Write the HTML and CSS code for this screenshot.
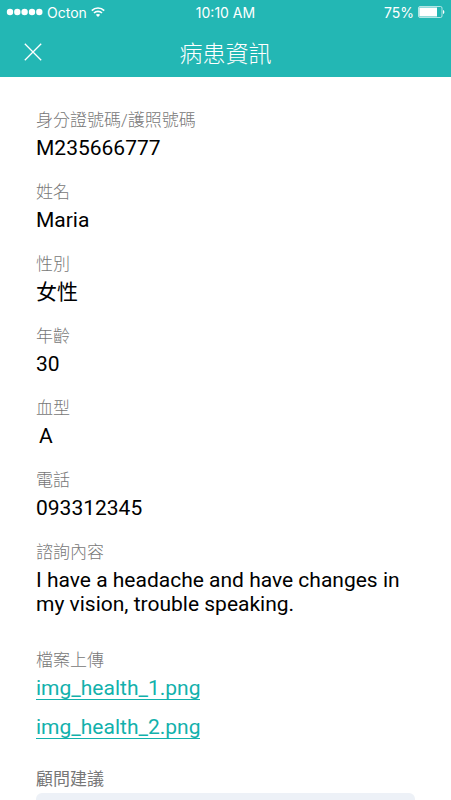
FILE: index.html
```html
<!DOCTYPE html>
<html lang="zh-Hant">
<head>
    <meta charset="UTF-8">
    <meta name="viewport" content="width=device-width, initial-scale=1.0">
    <title>病患資訊</title>
    <link rel="stylesheet" href="styles.css">
</head>
<body>
    <div class="screen">
        <header class="header">
            <div class="status-bar">
                <div class="status-left">
                    <svg class="signal" width="37" height="8" viewBox="0 0 37 8" fill="#fff" aria-hidden="true">
                        <circle cx="4" cy="4" r="3.2"/>
                        <circle cx="11.3" cy="4" r="3.2"/>
                        <circle cx="18.6" cy="4" r="3.2"/>
                        <circle cx="26" cy="4" r="3.2"/>
                        <circle cx="33.3" cy="4" r="3.2"/>
                    </svg>
                    <span>Octon</span>
                    <svg class="wifi" width="14" height="10" viewBox="0 0 14 10" fill="none" stroke="#fff" stroke-width="1.7" aria-hidden="true">
                        <path d="M0.8 3.6C4.3 0.1 9.7 0.1 13.2 3.6"/>
                        <path d="M3 6C5.2 3.8 8.8 3.8 11 6"/>
                        <path d="M7 9.9L4.8 7.7C6 6.6 8 6.6 9.2 7.7Z" fill="#fff" stroke="none"/>
                    </svg>
                </div>
                <div class="status-time">10:10 AM</div>
                <div class="status-right">
                    <span>75%</span>
                    <svg class="battery" width="27" height="12" viewBox="0 0 27 12" aria-hidden="true">
                        <rect x="0.5" y="0.5" width="23.5" height="11" rx="1.5" fill="none" stroke="#fff" stroke-opacity="0.65"/>
                        <rect x="1.3" y="1.5" width="17.7" height="9" fill="#fff"/>
                        <path d="M25 4C26.8 4.5 26.8 7.5 25 8Z" fill="#fff"/>
                    </svg>
                </div>
            </div>
            <div class="nav-bar">
                <button class="close-btn" type="button" aria-label="關閉">
                    <svg width="18" height="18" viewBox="0 0 18 18" fill="none" stroke="#fff" stroke-width="1.3" aria-hidden="true">
                        <path d="M0.8 0.8L17.2 17.2M17.2 0.8L0.8 17.2"/>
                    </svg>
                </button>
                <h1>病患資訊</h1>
            </div>
        </header>

        <main class="content">
            <dl class="patient-info">
                <div class="field">
                    <dt>身分證號碼/護照號碼</dt>
                    <dd>M235666777</dd>
                </div>
                <div class="field">
                    <dt>姓名</dt>
                    <dd>Maria</dd>
                </div>
                <div class="field">
                    <dt>性別</dt>
                    <dd>女性</dd>
                </div>
                <div class="field">
                    <dt>年齡</dt>
                    <dd>30</dd>
                </div>
                <div class="field">
                    <dt>血型</dt>
                    <dd class="blood-type">A</dd>
                </div>
                <div class="field">
                    <dt>電話</dt>
                    <dd>093312345</dd>
                </div>
                <div class="field field-long">
                    <dt>諮詢內容</dt>
                    <dd>I have a headache and have changes in my vision, trouble speaking.</dd>
                </div>
                <div class="field field-files">
                    <dt>檔案上傳</dt>
                    <dd class="files">
                        <a href="#">img_health_1.png</a>
                        <a href="#">img_health_2.png</a>
                    </dd>
                </div>
            </dl>

            <div class="advice">
                <label for="advice">顧問建議</label>
                <textarea id="advice" rows="5"></textarea>
            </div>
        </main>
    </div>
</body>
</html>
```
FILE: styles.css
```css
* {
    box-sizing: border-box;
}
body {
    margin: 0;
    font-family: Roboto, "Noto Sans CJK TC", sans-serif;
    background: #fff;
    color: #000;
}
.screen {
    display: flex;
    flex-direction: column;
    height: 100vh;
}

/* Header */
.header {
    flex: none;
    background: #23b7b4;
    color: #fff;
}
.status-bar {
    display: grid;
    grid-template-columns: 1fr auto 1fr;
    align-items: center;
    height: 24px;
    padding: 0 6px;
    font-family: Inter, "Liberation Sans", sans-serif;
    font-size: 14px;
}
.status-left,
.status-right {
    display: flex;
    align-items: center;
    gap: 4px;
}
.status-right {
    justify-content: flex-end;
}
.nav-bar {
    display: grid;
    grid-template-columns: 34px 1fr 34px;
    align-items: center;
    height: 53px;
    padding: 8px 16px 0;
}
.close-btn {
    display: flex;
    align-items: center;
    justify-content: center;
    height: 34px;
    margin-bottom: 6px;
    padding: 0;
    border: none;
    background: none;
    cursor: pointer;
}
.nav-bar h1 {
    margin: 0;
    font-size: 23px;
    font-weight: 300;
    line-height: 32px;
    text-align: center;
}

/* Patient details */
.content {
    flex: 1;
    min-height: 0;
    overflow-y: auto;
    scrollbar-width: none;
    padding: 31px 36px;
}
.patient-info {
    margin: 0;
}
.field {
    margin-bottom: 20px;
}
.field-long {
    margin-bottom: 32px;
}
.field-files {
    margin-bottom: 28px;
}
.field dt,
.advice label {
    display: block;
    color: #777;
    font-size: 17px;
    font-weight: 300;
    line-height: 24px;
}
.field dd {
    margin: 4px 0 0;
    font-size: 21px;
    line-height: 24px;
}
.field .blood-type {
    padding-left: 3px;
}
.files {
    display: flex;
    flex-direction: column;
    align-items: flex-start;
    gap: 15px;
}
.files a {
    height: 24px;
    border-bottom: 1px solid #12b1ac;
    color: #12b1ac;
    text-decoration: none;
}
.advice label {
    font-weight: 400;
}
.advice textarea {
    display: block;
    width: 100%;
    margin-top: 2px;
    padding: 12px;
    border: none;
    border-radius: 6px;
    background: #edf1f7;
    font: inherit;
    resize: none;
}
```
